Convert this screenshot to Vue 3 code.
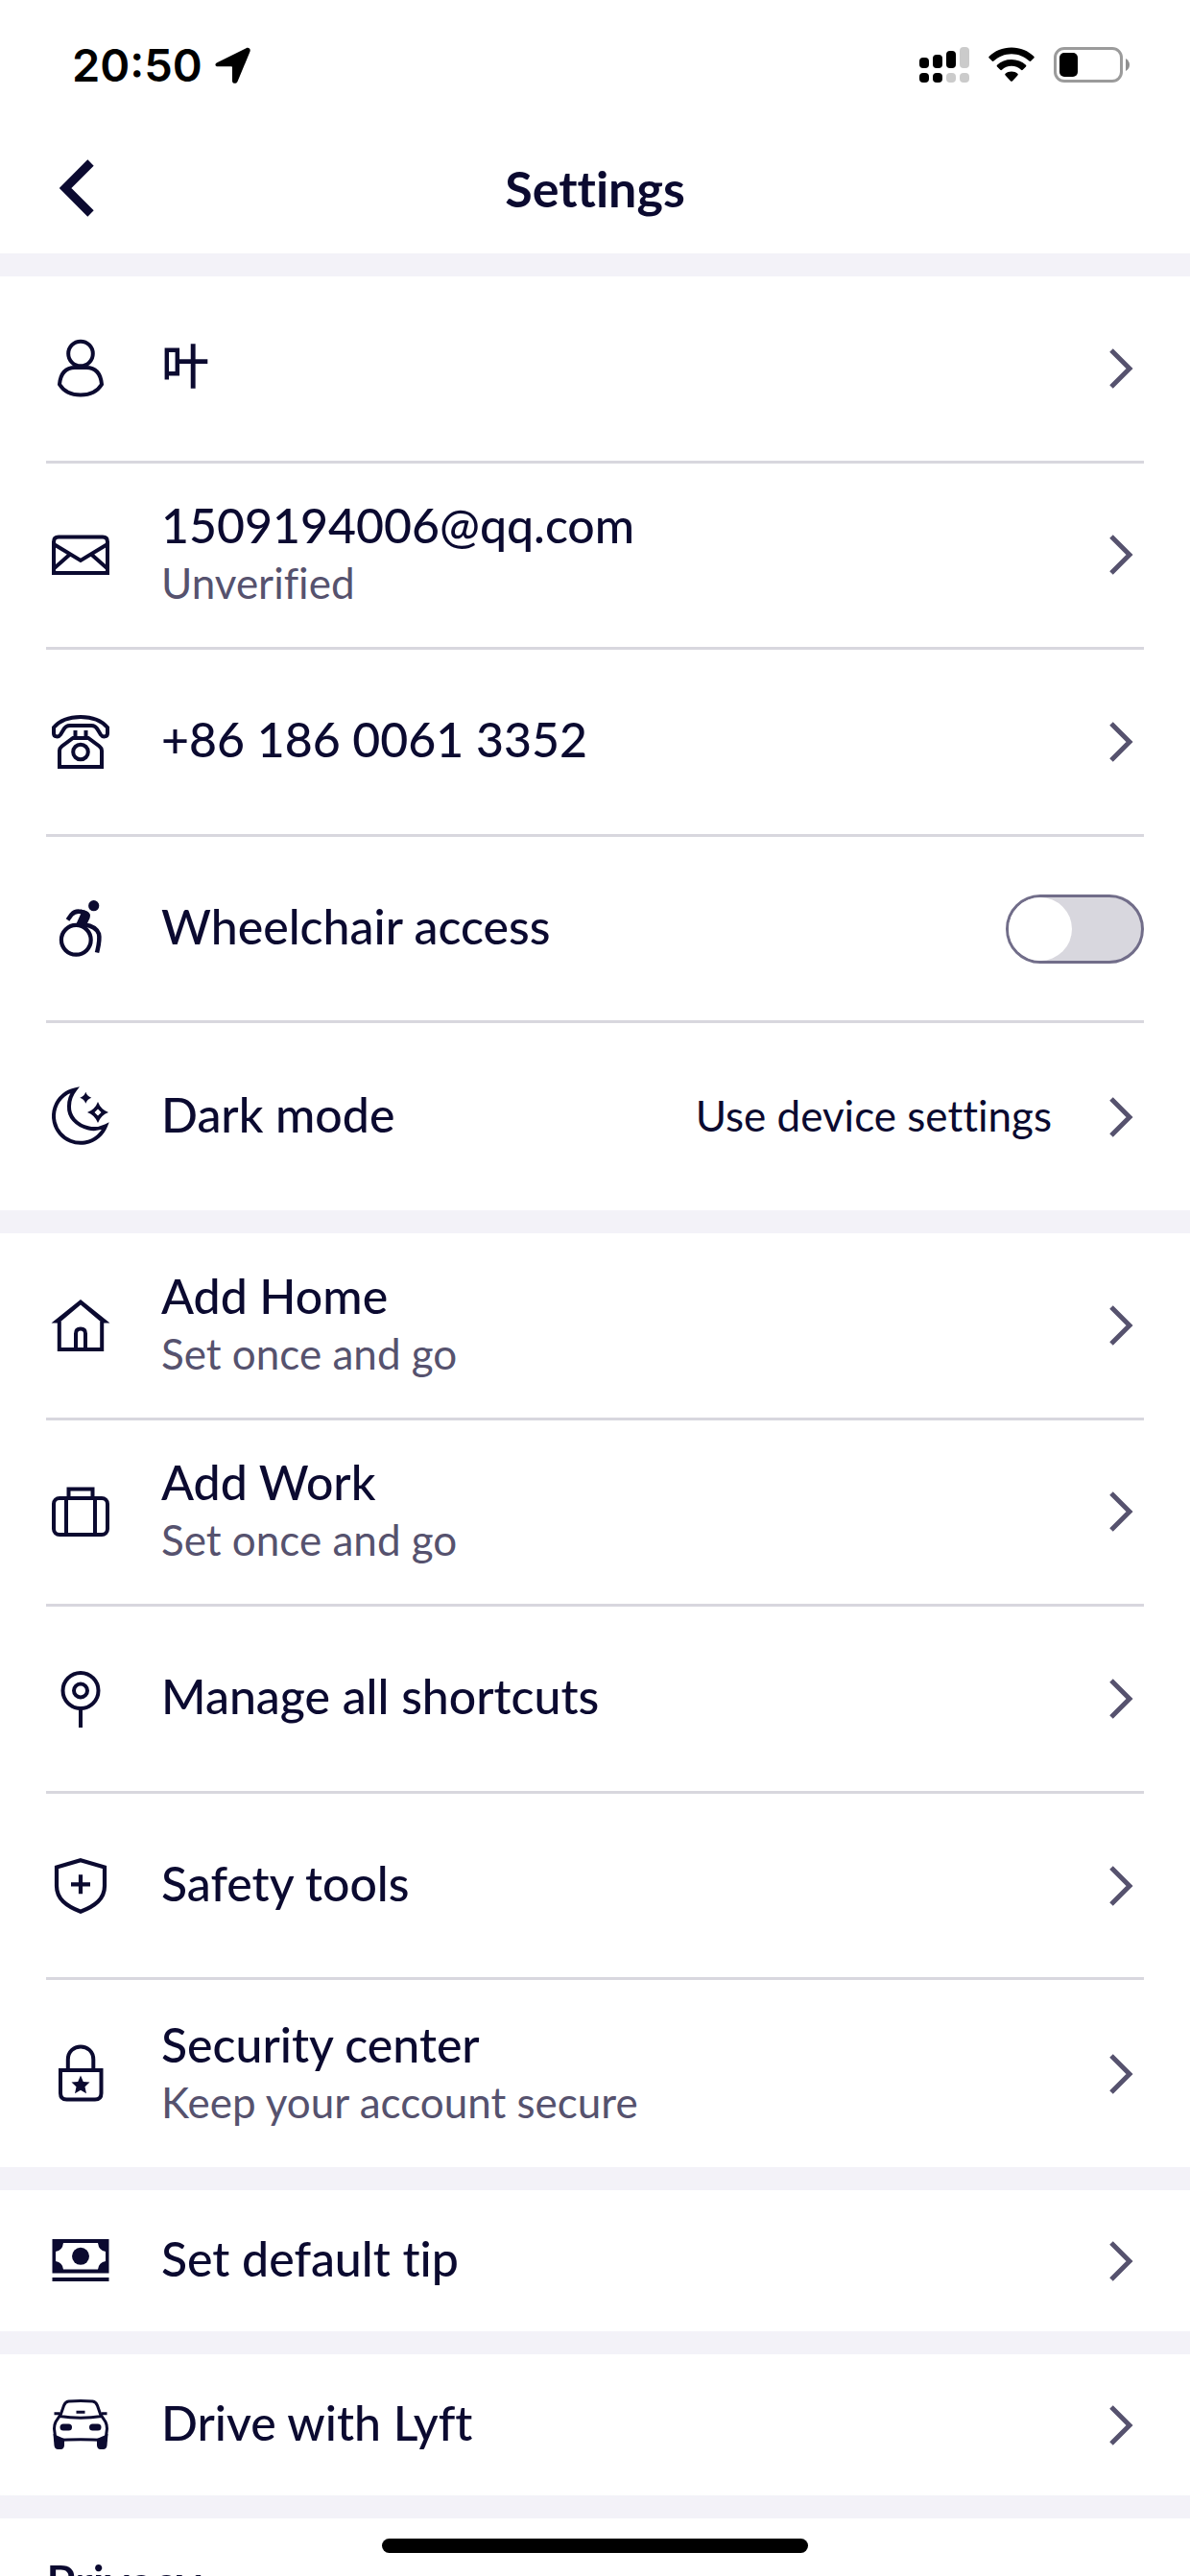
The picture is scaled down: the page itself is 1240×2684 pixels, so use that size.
<script setup>
import { ref } from 'vue'

const wheelchair = ref(false)

const sections = [
  [
    { icon: 'user', title: '叶' },
    { icon: 'mail', title: '1509194006@qq.com', note: 'Unverified' },
    { icon: 'phone', title: '+86 186 0061 3352' },
    { icon: 'wheelchair', title: 'Wheelchair access', toggle: true },
    { icon: 'moon', title: 'Dark mode', value: 'Use device settings' },
  ],
  [
    { icon: 'home', title: 'Add Home', note: 'Set once and go' },
    { icon: 'work', title: 'Add Work', note: 'Set once and go' },
    { icon: 'pin', title: 'Manage all shortcuts' },
    { icon: 'shield', title: 'Safety tools' },
    { icon: 'lock', title: 'Security center', note: 'Keep your account secure' },
  ],
  [{ icon: 'cash', title: 'Set default tip' }],
  [{ icon: 'car', title: 'Drive with Lyft' }],
]
</script>

<template>
  <div class="screen">
    <svg class="sprite" aria-hidden="true">
      <symbol id="user" viewBox="0 0 72 72">
        <circle cx="36" cy="20.5" r="12.8" />
        <path d="M14 52.5C15 42 20 35 30 35h12c10 0 15 7 16 17.500C54 59 46 63.500 36 63.500S18 59 14 52.500z" />
      </symbol>
      <symbol id="mail" viewBox="0 0 72 72">
        <path d="M8 55V22.500q0-5 5-5h46q5 0 5 5V55zM8 25l28 17 28-17M8 50.500L25.500 35M64 50.500L46.500 35" />
      </symbol>
      <symbol id="phone" viewBox="0 0 72 72">
        <path d="M8 21C14 14 24 10 36 10s22 4 28 11v6c0 4-5 4.500-7 1.500l-3-5c-1.500-3-4-4.500-7-4.500H25c-3 0-5.500 1.500-7 4.500l-3 5c-2 3-7 2.500-7-1.500z" />
        <path d="M30.500 24v8M41.500 24v8M14 62V45q0-2.500 2.500-4.500L28 32h16l11.500 8.500q2.500 2 2.500 4.500v17z" />
        <circle cx="36" cy="46.500" r="7.800" />
      </symbol>
      <symbol id="wheelchair" viewBox="0 0 72 72">
        <circle class="solid" cx="49.700" cy="11.700" r="5.600" />
        <circle cx="31.300" cy="47.300" r="15.400" stroke-width="4.200" />
        <path d="M22.500 26.500l4-5.500q4-4.500 10-3l4 1" stroke-width="4.500" />
        <path class="solid" d="M36 15.500l6.500 1.800q5 2.500 3 7.500L41.500 33l-10.500-1.500 5.500-12z" />
        <path d="M40 31.500c8 1 13 4 15 9.500 1.500 6-.5 13-2 19.500" stroke-width="4.500" />
      </symbol>
      <symbol id="moon" viewBox="0 0 72 72">
        <path d="M30 7.500A28 28 0 1 0 62 45.200C56 48 50 48.800 44.500 47.500 31 44.500 23.500 35 24 24.500 24 18 26.500 12 30 7.500z" />
        <path class="solid" d="M41.300 9.800q1.500 4.500 6 6-4.500 1.500-6 6-1.500-4.500-6-6 4.500-1.500 6-6z" />
        <path class="solid" fill-rule="evenodd" d="M54 20q3 8 11 11-8 3-11 11-3-8-11-11 8-3 11-11zm0 7.500l-3.500 3.500 3.500 3.500 3.500-3.500z" />
      </symbol>
      <symbol id="home" viewBox="0 0 72 72">
        <path d="M13.800 32v29h44.400V32M31 61V44.500q0-5 5-5t5 5V61" />
        <path class="solid" d="M36 9l30.500 24.500h-8L36 14.500l-22.500 19h-8z" />
      </symbol>
      <symbol id="work" viewBox="0 0 72 72">
        <rect x="8" y="22" width="56" height="38" rx="6" />
        <path d="M23.500 22v-9.500h25V22M21 22v38M51 22v38" />
      </symbol>
      <symbol id="pin" viewBox="0 0 72 72">
        <circle cx="36" cy="27.500" r="18.500" />
        <circle cx="36" cy="27.500" r="7" stroke-width="4" />
        <path d="M36 46v20" />
      </symbol>
      <symbol id="shield" viewBox="0 0 72 72">
        <path d="M36 9.200l25 7.300V36c0 13.500-10 21-25 26.800C21 57 11 49.500 11 36V16.500z" stroke-width="4.200" />
        <path d="M26 34.300h20M36 24.300v20" stroke-width="4.200" />
      </symbol>
      <symbol id="lock" viewBox="0 0 72 72">
        <path d="M15 32h42.500v24q0 6.500-6.500 6.500H21.500q-6.500 0-6.500-6.500zM22.800 32V21c0-18 26.500-18 26.500 0v11" />
        <path class="solid" d="M36 37.500l2.800 6.500 6.700.6-5 4.700 1.500 7-6-3.500-6 3.500 1.500-7-5-4.700 6.700-.6z" />
      </symbol>
      <symbol id="cash" viewBox="0 0 72 72">
        <path class="solid" fill-rule="evenodd" d="M6.500 13h59v35.500h-59zM18 17q-1 8-8 9v10q7 1 8 8.500h36q1-7.500 8-8.500V26q-7-1-8-9z" />
        <circle class="solid" cx="36" cy="30.800" r="9" />
        <path d="M6.500 55h59" />
      </symbol>
      <symbol id="car" viewBox="0 0 72 72">
        <path d="M14.500 27l4-11.500q1.500-4 5-4.500 12.500-1 25 0 3.500.5 5 4.500l4 11.500M14 26.500q22 3.500 44 0l4 6q1.500 3 1.500 7l-1.500 12q-26-1.500-52 0l-1.500-12q0-4 1.500-7z" stroke-width="3" />
        <path d="M8.500 23.700h6M57.500 23.700h6M31.500 22.200h9" stroke-width="3" />
        <rect class="solid" x="14.500" y="34.500" width="12.500" height="7" rx="3.500" />
        <rect class="solid" x="45" y="34.500" width="12.500" height="7" rx="3.500" />
        <path class="solid" d="M7.500 45l1 12q.5 4 4 4h3q3 0 3.500-4V50zM64.500 45l-1 12q-.5 4-4 4h-3q-3 0-3.500-4V50z" />
      </symbol>
    </svg>

    <div class="status">
      <span class="time">20:50</span>
      <svg class="location" viewBox="0 0 38 38" aria-hidden="true">
        <path d="M2.200 16.200L32.500 1.200c2.500-1.200 5 .8 4 3.600L23.500 36c-1.200 2.800-5.500 2.300-5.500-.8V21.500c0-.8-.4-1.200-1.200-1.200H3C0 20.300-.5 17.500 2.200 16.200z" />
      </svg>
      <svg class="signal" viewBox="0 0 52 38" aria-hidden="true">
        <rect x="0" y="11" width="10" height="11" rx="4" />
        <rect x="14" y="8" width="10" height="14" rx="4" />
        <rect x="28" y="4" width="10" height="18" rx="4" />
        <rect class="off" x="42" y="0" width="10" height="22" rx="4" />
        <rect x="0" y="27" width="10" height="10" rx="4" />
        <rect x="14" y="27" width="10" height="10" rx="4" />
        <rect class="off" x="28" y="27" width="10" height="10" rx="4" />
        <rect class="off" x="42" y="27" width="10" height="10" rx="4" />
      </svg>
      <svg class="wifi" viewBox="0 0 48 38" aria-hidden="true">
        <path d="M24 0.500C33.500.5 41.500 4 47.300 9.800q.9.900 0 1.800l-3 3q-.9.900-1.800 0C37.500 10 31 7.300 24 7.300S10.500 10 5.500 14.600q-.9.900-1.800 0l-3-3q-.9-.9 0-1.800C6.500 4 14.500.5 24 .5z" />
        <path d="M24 13c5.800 0 11 2.200 15 5.700q.9.900 0 1.800l-3.300 3.300q-.8.800-1.700 0C31.300 21.300 28 19.800 24 19.800s-7.300 1.500-10 4q-.9.800-1.700 0L9 20.500q-.9-.9 0-1.800 6-5.700 15-5.700z" />
        <path d="M24 25.500c2.500 0 4.700.9 6.400 2.300q.9.800 0 1.700l-5.500 5.900q-.9.900-1.800 0l-5.500-5.900q-.9-.9 0-1.700c1.700-1.400 3.900-2.300 6.400-2.300z" />
      </svg>
      <svg class="battery" viewBox="0 0 80 38" aria-hidden="true">
        <rect x="1.500" y="1.500" width="69" height="34" rx="9.500" fill="none" stroke="#9b9b9b" stroke-width="3" />
        <rect x="6" y="6" width="19" height="25" rx="5" />
        <path d="M75 12q4 2.500 4 6.500t-4 6.500z" fill="#8f8f8f" />
      </svg>
    </div>

    <header class="nav">
      <button class="back" type="button" aria-label="Back">
        <svg viewBox="0 0 36 60" aria-hidden="true"><path d="M32.500 3.500L6 30l26.500 26.500" /></svg>
      </button>
      <h1>Settings</h1>
    </header>

    <main>
      <ul v-for="(rows, i) in sections" :key="i" class="group" :class="{ long: rows.length > 1 }">
        <li v-for="row in rows" :key="row.title">
          <component
            :is="row.toggle ? 'label' : 'a'"
            class="row"
            :href="row.toggle ? undefined : '#'"
            :for="row.toggle ? 'wheelchair-toggle' : undefined"
          >
            <svg class="icon" aria-hidden="true"><use :href="'#' + row.icon" /></svg>
            <span class="text">
              <span class="title">{{ row.title }}</span>
              <span v-if="row.note" class="note">{{ row.note }}</span>
            </span>
            <span v-if="row.value" class="value">{{ row.value }}</span>
            <input v-if="row.toggle" id="wheelchair-toggle" v-model="wheelchair" class="toggle" type="checkbox" role="switch" />
            <svg v-else class="chevron" viewBox="0 0 48 48" aria-hidden="true"><path d="M14 5l19 19-19 19" /></svg>
          </component>
        </li>
      </ul>
      <section class="privacy">
        <h2>Privacy</h2>
      </section>
    </main>

    <div class="home-bar"></div>
  </div>
</template>

<style>
body {
  background: #fff;
}
</style>

<style scoped>
.screen {
  position: relative;
  display: flex;
  flex-direction: column;
  height: 100vh;
  overflow: hidden;
  color: #0b0a30;
  background: #fff;
  font-family: Lato, "Noto Sans CJK SC", sans-serif;
  font-variant-ligatures: none;
}

.sprite {
  position: absolute;
  width: 0;
  height: 0;
}

.status {
  display: flex;
  flex: none;
  align-items: center;
  height: 136px;
  padding: 0 62px 0 75px;
  color: #000;
}

.time {
  font: 600 47px/56px Inter, sans-serif;
}

.location {
  width: 38px;
  height: 38px;
  margin-left: 13px;
}

.signal {
  width: 52px;
  height: 38px;
  margin-left: auto;
}

.signal .off {
  fill: #cbcbcb;
}

.wifi {
  width: 48px;
  height: 38px;
  margin: 0 20px;
}

.battery {
  width: 80px;
  height: 38px;
}

.nav {
  display: grid;
  flex: none;
  grid-template-columns: 1fr auto 1fr;
  align-items: center;
  box-sizing: border-box;
  height: 128px;
  padding: 0 48px 8px;
}

.back {
  display: flex;
  width: 64px;
  padding: 0 14px;
  border: 0;
  background: none;
}

.back svg {
  width: 36px;
  height: 60px;
  fill: none;
  stroke: #0b0a30;
  stroke-width: 9px;
}

h1,
h2 {
  margin: 0;
  line-height: 60px;
}

h1 {
  font-size: 52px;
}

h2 {
  font-size: 50px;
  font-weight: 600;
}

main {
  flex: 1;
  overflow-y: auto;
  scrollbar-width: none;
}

.group {
  display: grid;
  grid-auto-rows: 1fr;
  min-height: 147px;
  margin: 0;
  padding: 0 48px;
  border-top: 24px solid #f3f2f8;
  list-style: none;
}

.group.long {
  min-height: 973px;
}

li {
  display: flex;
}

li:not(:last-child) {
  border-bottom: 3px solid #d8d7de;
}

.row {
  display: flex;
  flex: 1;
  align-items: center;
  color: inherit;
  text-decoration: none;
}

.icon {
  flex: none;
  width: 72px;
  height: 72px;
  margin-right: 48px;
  fill: none;
  stroke: #0b0a30;
  stroke-width: 4px;
}

.solid {
  fill: #0b0a30;
  stroke: none;
}

.text {
  display: flex;
  flex: 1;
  flex-direction: column;
  gap: 4px;
  padding-bottom: 6px;
}

.title {
  font-size: 50px;
  font-weight: 500;
  line-height: 60px;
}

.note,
.value {
  font-size: 44px;
  line-height: 52px;
}

.note {
  color: #56526e;
}

.value {
  padding-bottom: 4px;
  margin-right: 48px;
}

.chevron {
  flex: none;
  width: 48px;
  height: 48px;
  fill: none;
  stroke: #56526e;
  stroke-width: 5px;
}

.toggle {
  flex: none;
  box-sizing: border-box;
  width: 144px;
  height: 72px;
  margin: 0;
  border: 3px solid #716d89;
  border-radius: 36px;
  background: #d8d7de;
  appearance: none;
}

.toggle::before {
  display: block;
  width: 66px;
  height: 66px;
  border-radius: 50%;
  background: #fff;
  content: "";
}

.toggle:checked {
  background: #56526e;
}

.toggle:checked::before {
  margin-left: auto;
}

.privacy {
  padding: 36px 48px 48px;
  border-top: 24px solid #f3f2f8;
}

.home-bar {
  position: absolute;
  bottom: 24px;
  left: 50%;
  width: 444px;
  height: 15px;
  border-radius: 8px;
  background: #000;
  transform: translateX(-50%);
}
</style>
